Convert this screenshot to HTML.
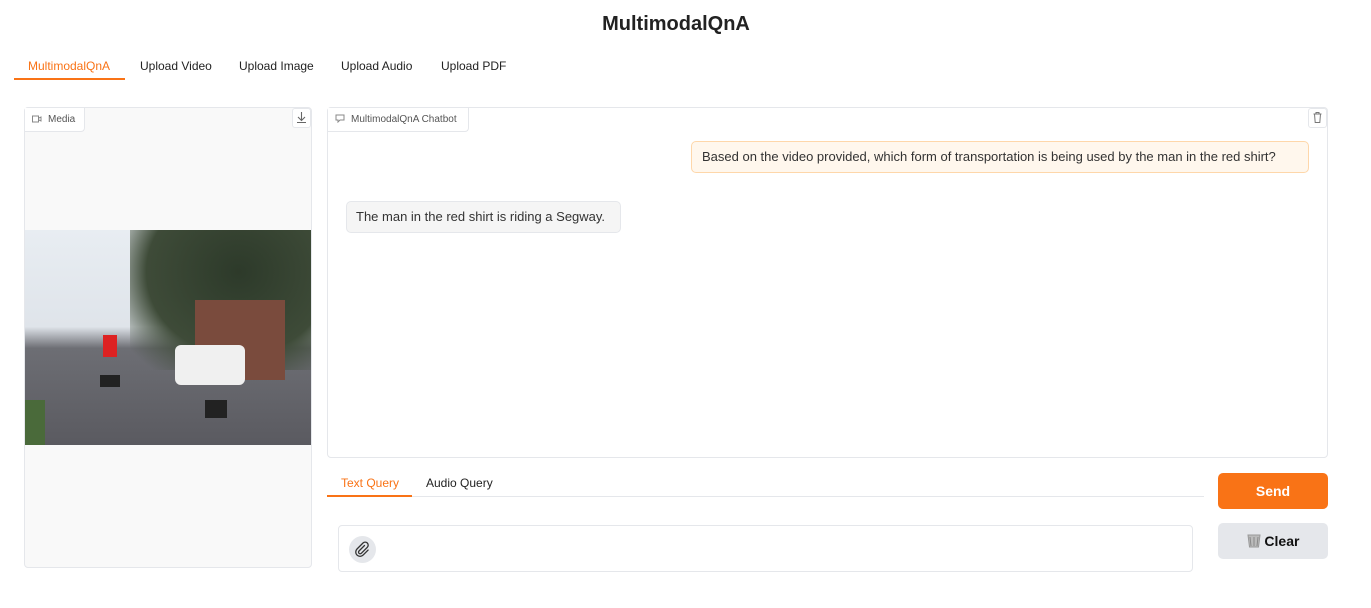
<!DOCTYPE html>
<html><head><style>
*{box-sizing:border-box;margin:0;padding:0}
body{width:1371px;height:608px;background:#fff;font-family:"Liberation Sans",sans-serif;color:#1f2937;position:relative;overflow:hidden}
.abs{position:absolute}
h1{position:absolute;top:13px;left:0;width:1352px;text-align:center;font-size:20px;font-weight:bold;color:#222}
.tab{position:absolute;top:59px;font-size:12px;color:#222}
.lbl{position:absolute;background:#fff;border:1px solid #e5e7eb;border-top:none;border-left:none;border-radius:0 0 4px 0;font-size:10px;color:#555;padding:0 7px;height:24px;line-height:23px}
.btn{position:absolute;border-radius:5px;font-weight:bold;font-size:14px;text-align:center}
</style></head><body>
<h1>MultimodalQnA</h1>
<div class="tab" style="left:28px;color:#f97316">MultimodalQnA</div>
<div class="abs" style="left:14px;top:78px;width:111px;height:2px;background:#f97316"></div>
<div class="tab" style="left:140px">Upload Video</div>
<div class="tab" style="left:239px">Upload Image</div>
<div class="tab" style="left:341px">Upload Audio</div>
<div class="tab" style="left:441px">Upload PDF</div>

<div class="abs" style="left:24px;top:107px;width:288px;height:461px;border:1px solid #e5e7eb;border-radius:4px;background:#f9f9f9"></div>
<div class="lbl" style="left:25px;top:108px;width:60px"><svg width="10" height="8" style="margin-right:6px;vertical-align:-1px"><rect x="0.5" y="1" width="6" height="6" fill="none" stroke="#888"/><path d="M7 3l2-1v4l-2-1" fill="none" stroke="#888"/></svg>Media</div>
<div class="abs" style="left:292px;top:108px;width:19px;height:20px;background:#fff;border:1px solid #e5e7eb;border-radius:3px"><svg width="17" height="18"><path d="M8.5 3v8M5 8l3.5 3.5L12 8M4 13.5h9" fill="none" stroke="#666" stroke-width="1.1"/></svg></div>
<div class="abs" style="left:25px;top:230px;width:286px;height:215px;overflow:hidden;background:linear-gradient(180deg,#e8edf2 0%,#dfe4ea 45%,#6d6e74 55%,#5a5a60 100%)">
 <div class="abs" style="left:105px;top:0;width:181px;height:140px;background:radial-gradient(ellipse at 60% 30%,#2d3a2a,#3e4b38 60%,rgba(60,70,55,0) 90%)"></div>
 <div class="abs" style="left:170px;top:70px;width:90px;height:80px;background:#7a4b3d"></div>
 <div class="abs" style="left:150px;top:115px;width:70px;height:40px;background:#f0f0f0;border-radius:6px"></div>
 <div class="abs" style="left:78px;top:105px;width:14px;height:22px;background:#d22"></div>
 <div class="abs" style="left:75px;top:145px;width:20px;height:12px;background:#222"></div>
 <div class="abs" style="left:180px;top:170px;width:22px;height:18px;background:#222"></div>
 <div class="abs" style="left:0;top:170px;width:20px;height:45px;background:#4a6a3a"></div>
</div>

<div class="abs" style="left:327px;top:107px;width:1001px;height:351px;border:1px solid #e5e7eb;border-radius:4px"></div>
<div class="lbl" style="left:328px;top:108px;width:141px"><svg width="10" height="9" style="margin-right:6px;vertical-align:-1px"><path d="M1 1h8v5H5l-2 2V6H1z" fill="none" stroke="#888"/></svg>MultimodalQnA Chatbot</div>
<div class="abs" style="left:1308px;top:108px;width:19px;height:20px;border:1px solid #e5e7eb;border-radius:3px"><svg width="17" height="18"><path d="M4.5 5h8M7 5V3.5h3V5M5.5 5l.7 8.5h4.6l.7-8.5" fill="none" stroke="#777" stroke-width="1"/></svg></div>
<div class="abs" style="left:691px;top:141px;width:618px;height:32px;background:#fff7ed;border:1px solid #fed7aa;border-radius:5px;font-size:13px;line-height:30px;padding-left:10px;color:#333;white-space:nowrap">Based on the video provided, which form of transportation is being used by the man in the red shirt?</div>
<div class="abs" style="left:346px;top:201px;width:275px;height:32px;background:#f5f5f5;border:1px solid #e5e7eb;border-radius:5px;font-size:13px;line-height:30px;padding-left:9px;color:#333">The man in the red shirt is riding a Segway.</div>

<div class="abs" style="left:341px;top:476px;font-size:12px;color:#f97316">Text Query</div>
<div class="abs" style="left:426px;top:476px;font-size:12px;color:#222">Audio Query</div>
<div class="abs" style="left:327px;top:496px;width:877px;height:1px;background:#e5e7eb"></div>
<div class="abs" style="left:327px;top:495px;width:85px;height:2px;background:#f97316"></div>
<div class="abs" style="left:338px;top:525px;width:855px;height:47px;border:1px solid #e5e7eb;border-radius:4px"></div>
<div class="abs" style="left:349px;top:536px;width:27px;height:27px;border-radius:50%;background:#e5e7eb"><svg width="27" height="27"><path d="M15.5 9.5l-5.5 5.5a1.6 1.6 0 0 0 2.3 2.3l6-6a3 3 0 0 0-4.3-4.3l-6 6a4.3 4.3 0 0 0 6.1 6.1l5-5" fill="none" stroke="#333" stroke-width="1.3" stroke-linecap="round"/></svg></div>

<div class="btn" style="left:1218px;top:473px;width:110px;height:36px;background:#f97316;color:#fff;line-height:36px">Send</div>
<div class="btn" style="left:1218px;top:523px;width:110px;height:36px;background:#e5e7eb;color:#111;line-height:36px"><svg width="14" height="15" style="vertical-align:-2px"><path d="M1 2h12l-1.5 12h-9z" fill="#bbb" stroke="#999"/><path d="M3 4l1 9M7 4v9M11 4l-1 9" stroke="#888"/></svg> Clear</div>
</body></html>
